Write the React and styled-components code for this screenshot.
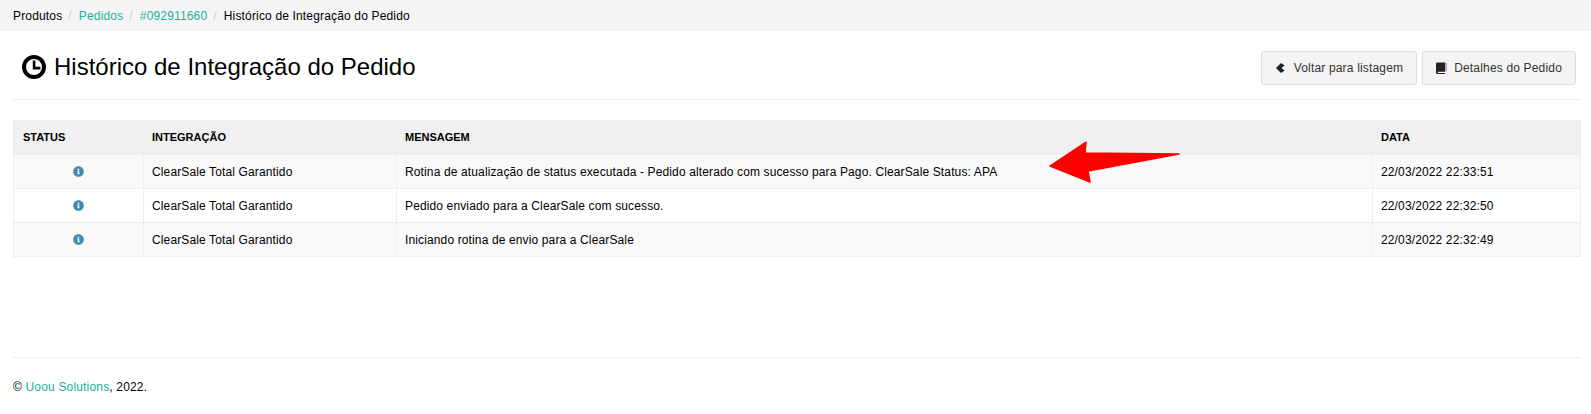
import React from "react";
import styled, { createGlobalStyle } from "styled-components";
import { FaInfoCircle } from "react-icons/fa";

const GlobalStyle = createGlobalStyle`
  html, body {
    margin: 0;
    padding: 0;
    background: #fff;
    color: #000;
    font-family: "Liberation Sans", Arial, sans-serif;
    font-size: 12px;
  }
`;

const Page = styled.div`
  position: relative;
  height: 414px;
  overflow: hidden;
`;

const Breadcrumb = styled.nav`
  display: flex;
  align-items: center;
  height: 31px;
  padding: 0 13px;
  background: #f5f5f5;
  letter-spacing: 0.16px;
`;

const Crumb = styled.span`
  color: ${(p) => (p.$link ? "#1ab394" : "#000")};
`;

const Separator = styled.span`
  color: #ccc;
  padding: 0 7px 0 6px;
`;

const Content = styled.div`
  padding: 0 10px 0 13px;
`;

const Header = styled.header`
  display: flex;
  justify-content: space-between;
  align-items: center;
  height: 68px;
  border-bottom: 1px solid #eee;
`;

const Title = styled.h1`
  display: flex;
  align-items: center;
  gap: 8px;
  margin: 4px 0 0 9px;
  font-size: 24px;
  font-weight: 400;
`;

const Actions = styled.div`
  display: flex;
  gap: 5px;
  margin: 6px 5px 0 0;
`;

const Button = styled.button`
  display: flex;
  align-items: center;
  gap: ${(p) => p.$gap}px;
  height: 34px;
  padding: 0 13px 0 ${(p) => p.$left}px;
  border: 1px solid #ddd;
  border-radius: 3px;
  background: #f4f4f4;
  color: #333;
  font: inherit;
  letter-spacing: 0.17px;
`;

const Table = styled.table`
  width: 100%;
  margin-top: 20px;
  border-collapse: collapse;
  table-layout: fixed;
  border: 1px solid #eee;
  letter-spacing: 0.13px;
`;

const HeadCell = styled.th`
  height: 34px;
  padding: 0 8px 2px;
  background: #f0f0f0;
  border: 1px solid #eee;
  box-sizing: border-box;
  text-align: left;
  font-size: 11px;
  font-weight: 700;
  letter-spacing: 0;

  &:first-child {
    padding-left: 9px;
  }
`;

const Row = styled.tr`
  background: ${(p) => (p.$odd ? "#f9f9f9" : "#fff")};
`;

const Cell = styled.td`
  height: 34px;
  padding: 0 8px;
  border: 1px solid #eee;
  box-sizing: border-box;
  text-align: ${(p) => (p.$center ? "center" : "left")};
`;

const StatusIcon = styled(FaInfoCircle)`
  display: inline-block;
  vertical-align: middle;
  margin-bottom: 2px;
  color: #428bad;
  font-size: 11px;
`;

const Footer = styled.footer`
  margin: 100px 10px 0 13px;
  padding-top: 22px;
  border-top: 1px solid #eee;
  letter-spacing: 0.17px;
`;

const FooterLink = styled.a`
  color: #1ab394;
  text-decoration: none;
`;

const Arrow = styled.svg`
  position: absolute;
  left: 1040px;
  top: 135px;
`;

const ClockIcon = () => (
  <svg width="24" height="24" viewBox="0 0 24 24">
    <circle cx="12" cy="12" r="10" fill="none" stroke="#000" strokeWidth="4" />
    <path d="M10.8 5.5h2.6v6.3h5v2.6h-7.6z" fill="#000" />
  </svg>
);

const ChevronIcon = () => (
  <svg width="9" height="10" viewBox="0 0 9 10">
    <path d="M5 0l3.6 2.4L5.4 5l3.2 2.6L5 10 0 5z" fill="#222" />
  </svg>
);

const BookIcon = () => (
  <svg width="12" height="12" viewBox="0 0 12 12">
    <path d="M2.4 0.5H10v9.3H3.2c-.7 0-.7 1.1 0 1.1H10V12H2.4C1.4 12 1 11.2 1 10.3V2C1 1 1.5.5 2.4.5z" fill="#222" />
    <rect x="10.5" y="0.5" width="1" height="9" fill="#777" />
  </svg>
);

const rows = [
  {
    id: 1,
    message:
      "Rotina de atualização de status executada - Pedido alterado com sucesso para Pago. ClearSale Status: APA",
    date: "22/03/2022 22:33:51",
  },
  { id: 2, message: "Pedido enviado para a ClearSale com sucesso.", date: "22/03/2022 22:32:50" },
  { id: 3, message: "Iniciando rotina de envio para a ClearSale", date: "22/03/2022 22:32:49" },
];

const App = () => {
  return (
    <Page>
      <GlobalStyle />
      <Breadcrumb>
        <Crumb>Produtos</Crumb>
        <Separator>/</Separator>
        <Crumb $link>Pedidos</Crumb>
        <Separator>/</Separator>
        <Crumb $link>#092911660</Crumb>
        <Separator>/</Separator>
        <Crumb>Histórico de Integração do Pedido</Crumb>
      </Breadcrumb>
      <Content>
        <Header>
          <Title>
            <ClockIcon />
            Histórico de Integração do Pedido
          </Title>
          <Actions>
            <Button $left={14} $gap={9}>
              <ChevronIcon />
              Voltar para listagem
            </Button>
            <Button $left={12} $gap={7}>
              <BookIcon />
              Detalhes do Pedido
            </Button>
          </Actions>
        </Header>
        <Table>
          <colgroup>
            <col style={{ width: 130 }} />
            <col style={{ width: 253 }} />
            <col style={{ width: 976 }} />
            <col />
          </colgroup>
          <thead>
            <tr>
              <HeadCell>STATUS</HeadCell>
              <HeadCell>INTEGRAÇÃO</HeadCell>
              <HeadCell>MENSAGEM</HeadCell>
              <HeadCell>DATA</HeadCell>
            </tr>
          </thead>
          <tbody>
            {rows.map((row, i) => (
              <Row key={row.id} $odd={i % 2 === 0}>
                <Cell $center>
                  <StatusIcon />
                </Cell>
                <Cell>ClearSale Total Garantido</Cell>
                <Cell>{row.message}</Cell>
                <Cell>{row.date}</Cell>
              </Row>
            ))}
          </tbody>
        </Table>
      </Content>
      <Footer>
        © <FooterLink>Uoou Solutions</FooterLink>, 2022.
      </Footer>
      <Arrow width="150" height="60" viewBox="1040 135 150 60">
        <path
          d="M1050 166L1086 142L1085 153L1179 154L1088 171L1090 182Z"
          fill="#ff0000"
          stroke="#ff0000"
          strokeWidth="1.5"
          strokeLinejoin="round"
        />
      </Arrow>
    </Page>
  );
};

export default App;
